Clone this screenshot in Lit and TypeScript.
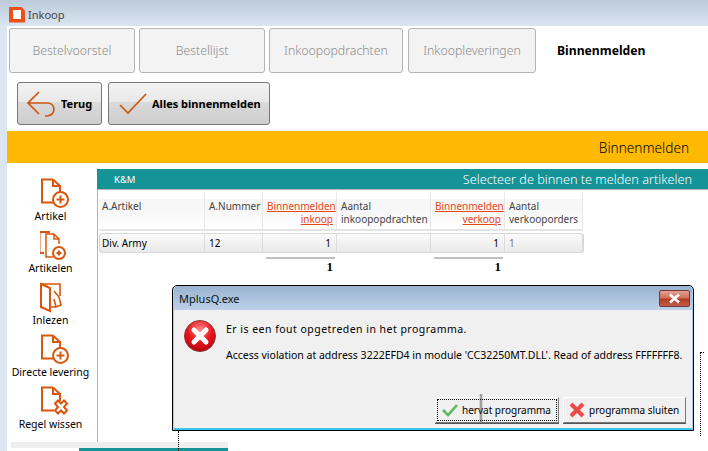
import { LitElement, html, css, svg } from "lit";
import { customElement } from "lit/decorators.js";

const OR = "#d9570d";
const docPath = svg`<path d="M13 1.5H2V24.5H14M13 1.5V8H20V15M13 1.5L20 8" fill="none" stroke="${OR}" stroke-width="2"/>`;
const plus = (cx: number, cy: number, r: number) => svg`<circle cx="${cx}" cy="${cy}" r="${r}" fill="#fff" stroke="${OR}" stroke-width="2"/><path d="M${cx - r + 3.5} ${cy}H${cx + r - 3.5}M${cx} ${cy - r + 3.5}V${cy + r - 3.5}" stroke="${OR}" stroke-width="2"/>`;

const iconDocPlus = html`<svg class="ic" width="30" height="31" viewBox="0 0 30 31">${docPath}${plus(20.5, 21.5, 7.5)}</svg>`;
const iconDocs = html`<svg class="ic" width="30" height="31" viewBox="2 0 30 31">
  <path d="M12 2H1.5V23H6" fill="none" stroke="${OR}" stroke-width="2"/>
  <path d="M16 4H8V27H15M16 4V9H21V14M16 4L21 9" fill="none" stroke="${OR}" stroke-width="1.5"/>
  ${plus(21, 23, 6)}
</svg>`;
const iconRead = html`<svg class="ic" width="30" height="31" viewBox="2 0 30 31">
  <path d="M3 2H22V14" fill="none" stroke="${OR}" stroke-width="1.6"/>
  <path d="M3 2L12 6V29L3 25Z" fill="#fff" stroke="${OR}" stroke-width="2"/>
  <path d="M12 25H18M16 9L21 15L23 23L18 25L16 17" fill="#fff" stroke="${OR}" stroke-width="1.6"/>
</svg>`;
const iconDocX = html`<svg class="ic" width="30" height="31" viewBox="0 0 30 31">${docPath}
  <path d="M15 17.5L18 14.5L21 17.5L24 14.5L27 17.5L24 21L27 24.5L24 27.5L21 24.5L18 27.5L15 24.5L18 21Z" fill="#fff" stroke="${OR}" stroke-width="2"/>
</svg>`;

const side: [unknown, string][] = [
  [iconDocPlus, "Artikel"], [iconDocs, "Artikelen"], [iconRead, "Inlezen"],
  [iconDocPlus, "Directe levering"], [iconDocX, "Regel wissen"],
];

@customElement("app-root")
export class AppRoot extends LitElement {
  static styles = css`
    :host { display: block; width: 708px; height: 451px; position: relative; overflow: hidden; background: #fff;
      font-family: "Noto Sans", sans-serif; font-size: 10.5px; color: #000; }
    .title { height: 26px; background: linear-gradient(#bccad9, #dae5f2); display: flex; align-items: center; gap: 3px; padding-left: 9px; box-sizing: border-box; padding-top: 3px; color: #444; font-size: 11px; }
    .logo { width: 16px; height: 16px; background: #ee4f1a; position: relative; clip-path: polygon(0 0, 75% 0, 100% 25%, 100% 100%, 0 100%); display: flex; align-items: center; justify-content: center; }
    .logo i { width: 8px; height: 9px; background: #fff; display: block; }
    .frame { margin-left: 7px; position: relative; }
    .strip { position: absolute; left: 0; top: 26px; bottom: 0; width: 7px; background: #dce6f2; }
    .tabs { display: flex; padding: 2px 0 0 2px; height: 56px; box-sizing: border-box; gap: 4px; }
    .tab { height: 45px; box-sizing: border-box; border: 1px solid #b4b4b4; border-radius: 3px; background: #f3f3f3; color: #8c8c8c; font-size: 12.3px; font-weight: 300; display: flex; align-items: center; justify-content: center; }
    .tab.w1, .tab.w2 { width: 126px; }
    .tab.w3 { width: 134px; }
    .tab.w4 { width: 128px; margin-left: 1px; }
    .tab.on { background: none; border: 0; color: #000; font-weight: 700; font-size: 12.2px; margin-left: 17px; }
    .tools { display: flex; gap: 6px; padding-left: 10px; height: 49px; }
    .tb { height: 43px; box-sizing: border-box; border: 1px solid #777; border-radius: 3px; background: linear-gradient(#f3f3f3 0, #e8e8e8 46%, #dadada 46%, #cdcdcd 100%); display: flex; align-items: center; font-weight: 700; font-size: 11px; }
    .tb.a { width: 85px; padding-left: 9px; gap: 4px; }
    .tb.b { width: 162px; padding-left: 10px; gap: 5px; }
    .band { height: 32px; background: #ffb900; display: flex; align-items: center; justify-content: flex-end; padding-right: 19px; font-size: 13.6px; font-weight: 300; }
    .body { display: flex; margin-top: 6px; }
    .side { width: 90px; height: 272px; box-sizing: border-box; padding: 9px 3px 0 0; display: flex; flex-direction: column; }
    .it { height: 52px; display: flex; flex-direction: column; align-items: center; flex: none; }
    .ic { display: block; margin-left: 9px; flex: none; }
    .it span { line-height: 14px; white-space: nowrap; }
    .main { flex: 1; }
    .hdr { height: 20px; background: #159397; color: #fff; display: flex; justify-content: space-between; align-items: center; padding: 0 16px 0 17px; font-size: 12.7px; font-weight: 300; border-bottom: 1px solid #b4b4b4; }
    .hdr b { font-weight: 400; font-size: 9.5px; }
    .panel { height: 252px; width: 130px; border-left: 1px solid #b4b4b4; border-bottom: 1px solid #b4b4b4; position: relative; }
    .grid { display: grid; grid-template-columns: 106px 58px 74px 94px 74px 78px; width: 484px; margin-left: 1px; padding-top: 1px; font-size: 10px; }
    .th { height: 40px; box-sizing: border-box; padding: 9px 3px 0 4px; line-height: 13px; color: #444; background: linear-gradient(#fff 0, #fff 22%, #f7f7f7 22%, #f7f7f7 50%, #fff 100%); border-right: 1px solid #e8e8e8; border-bottom: 2px solid #e4e4e4; white-space: nowrap; }
    .th:first-child { padding-left: 3px; }
    .th.lnk { color: #e8481a; text-decoration: underline; text-align: right; }
    .td { height: 20px; margin-top: 2px; box-sizing: border-box; padding: 0 4px; display: flex; align-items: center; background: linear-gradient(#fbfbfb, #e9e9e9); border-top: 1px solid #d8d8d8; border-bottom: 1px solid #d8d8d8; border-right: 1px solid #dcdcdc; }
    .td.first { border-left: 1px solid #d8d8d8; border-radius: 3px 0 0 3px; padding-left: 2px; }
    .td.last { border-radius: 0 3px 3px 0; color: #777; box-shadow: 1px 0 0 #d8d8d8; }
    .td.num { justify-content: flex-end; padding-right: 5px; }
    .tot { height: 24px; }
    .tot.s { margin: 4px 2px 0 3px; border-top: 2px solid #c0c0c0; height: 19px; font: 700 13px/14px "Liberation Serif", serif; text-align: right; padding: 1px 2px 0 0; box-sizing: content-box; }
    .foot { position: absolute; left: 11px; top: 442px; width: 217px; height: 9px; background: linear-gradient(#eeeeee 0 6px, transparent 6px); }
    .foot i { position: absolute; left: 68px; right: 0; top: 6px; height: 3px; background: #159397; }
    .dot1 { position: absolute; left: 178px; top: 431px; height: 20px; border-left: 1px dotted #000; }
    .dot2 { position: absolute; left: 700px; top: 352px; height: 83px; width: 3px; border-left: 1px dotted #000; border-top: 1px dotted #000; }
    .dlg { position: absolute; left: 172px; top: 285px; width: 522px; height: 146px; box-sizing: border-box; border: 1px solid #000; border-radius: 5px 5px 0 0; background: #f0f0f0; box-shadow: inset 1px 0 0 #a9cdee, inset -1px 0 0 #a9cdee, inset 0 -2px 0 #39c6ea; display: flex; flex-direction: column; }
    .dt { height: 24px; margin: 0 1px; flex: none; background: linear-gradient(#98b2d0, #bdd2e9); border-radius: 4px 4px 0 0; display: flex; align-items: center; padding-left: 5px; font-size: 11px; color: #111; position: relative; }
    .cl { position: absolute; right: 2px; top: 4px; width: 31px; height: 17px; box-sizing: border-box; border: 1px solid #6d3a36; border-radius: 2px; background: linear-gradient(#e8a090 0, #d0705e 45%, #b23a26 55%, #c55f4a 100%); display: flex; align-items: center; justify-content: center; }
    .db { position: relative; flex: 1; display: flex; flex-direction: column; }
    .row { display: flex; padding: 10px 0 0 11px; gap: 10px; }
    .msg { padding-top: 3px; line-height: 13px; font-size: 10.5px; }
    .msg p { margin: 0 0 13px; white-space: nowrap; }
    .msg p.w { letter-spacing: .47px; }
    .acts { position: absolute; right: 7px; bottom: 7px; display: flex; gap: 4px; }
    .btn { height: 26px; box-sizing: border-box; background: #f0f0f0; border: 1px solid; border-color: #fff #777 #777 #fff; box-shadow: 0 1px 0 #555; display: flex; align-items: center; font-size: 10px; position: relative; white-space: nowrap; }
    .btn.o { width: 124px; padding-left: 6px; gap: 4px; outline: 1px dotted #000; outline-offset: -3px; }
    .btn.c { width: 123px; padding-left: 5px; gap: 4px; }
    .sm { position: absolute; left: 43px; top: -4px; bottom: 0; width: 4px; background: linear-gradient(90deg, transparent, rgba(60,60,60,.6), transparent); }
  `;

  render() {
    return html`
      <div class="title"><div class="logo"><i></i></div><span>Inkoop</span></div>
      <div class="strip"></div>
      <div class="frame">
        <div class="tabs">
          <div class="tab w1">Bestelvoorstel</div>
          <div class="tab w2">Bestellijst</div>
          <div class="tab w3">Inkoopopdrachten</div>
          <div class="tab w4">Inkoopleveringen</div>
          <div class="tab on">Binnenmelden</div>
        </div>
        <div class="tools">
          <div class="tb a">
            <svg width="30" height="28" viewBox="0 0 30 28"><path d="M12 2L1 13L12 24M1 13H21C29 14 29 25 20 26H18" fill="none" stroke="#cf560f" stroke-width="1.7"/></svg>
            <span>Terug</span>
          </div>
          <div class="tb b">
            <svg width="28" height="24" viewBox="0 0 28 24"><path d="M1 13L9 21L27 2" fill="none" stroke="#cf560f" stroke-width="1.7"/></svg>
            <span>Alles binnenmelden</span>
          </div>
        </div>
        <div class="band">Binnenmelden</div>
        <div class="body">
          <div class="side">
            ${side.map(([i, t]) => html`<div class="it">${i}<span>${t}</span></div>`)}
          </div>
          <div class="main">
            <div class="hdr"><b>K&amp;M</b><span>Selecteer de binnen te melden artikelen</span></div>
            <div class="panel">
              <div class="grid">
                <div class="th">A.Artikel</div>
                <div class="th">A.Nummer</div>
                <div class="th lnk">Binnenmelden<br />inkoop</div>
                <div class="th">Aantal<br />inkoopopdrachten</div>
                <div class="th lnk">Binnenmelden<br />verkoop</div>
                <div class="th">Aantal<br />verkooporders</div>
                <div class="td first">Div. Army</div>
                <div class="td">12</div>
                <div class="td num">1</div>
                <div class="td"></div>
                <div class="td num">1</div>
                <div class="td last">1</div>
                <div class="tot"></div>
                <div class="tot"></div>
                <div class="tot s">1</div>
                <div class="tot"></div>
                <div class="tot s">1</div>
                <div class="tot"></div>
              </div>
            </div>
          </div>
        </div>
      </div>
      <div class="foot"><i></i></div>
      <div class="dot1"></div>
      <div class="dot2"></div>
      <div class="dlg">
        <div class="dt">MplusQ.exe
          <div class="cl"><svg width="15" height="11" viewBox="0 0 15 11"><path d="M3 1.5L12 9.5M12 1.5L3 9.5" stroke="#fff" stroke-width="2.6"/></svg></div>
        </div>
        <div class="db">
          <div class="row">
            <svg width="32" height="32" viewBox="0 0 32 32" style="flex:none">
              <defs><radialGradient id="rd" cx=".5" cy=".3" r=".8"><stop offset="0" stop-color="#ff8a8a"/><stop offset=".5" stop-color="#e8131b"/><stop offset="1" stop-color="#a8000a"/></radialGradient></defs>
              <circle cx="16" cy="16" r="15.5" fill="url(#rd)" stroke="#8a3a3a" stroke-width="1"/>
              <path d="M10 10L22 22M22 10L10 22" stroke="#fff" stroke-width="5" stroke-linecap="round"/>
            </svg>
            <div class="msg">
              <p class="w">Er is een fout opgetreden in het programma.</p>
              <p>Access violation at address 3222EFD4 in module 'CC32250MT.DLL'. Read of address FFFFFFF8.</p>
            </div>
          </div>
          <div class="acts">
            <div class="btn o">
              <svg width="16" height="14" viewBox="0 0 16 14"><path d="M1 7L6 12L15 2" fill="none" stroke="#5cb85c" stroke-width="2.6"/></svg>
              <span>hervat programma</span><i class="sm"></i>
            </div>
            <div class="btn c">
              <svg width="16" height="16" viewBox="0 0 16 16"><path d="M2 2L14 14M14 2L2 14" stroke="#ea4a4a" stroke-width="4"/></svg>
              <span>programma sluiten</span>
            </div>
          </div>
        </div>
      </div>
    `;
  }
}
